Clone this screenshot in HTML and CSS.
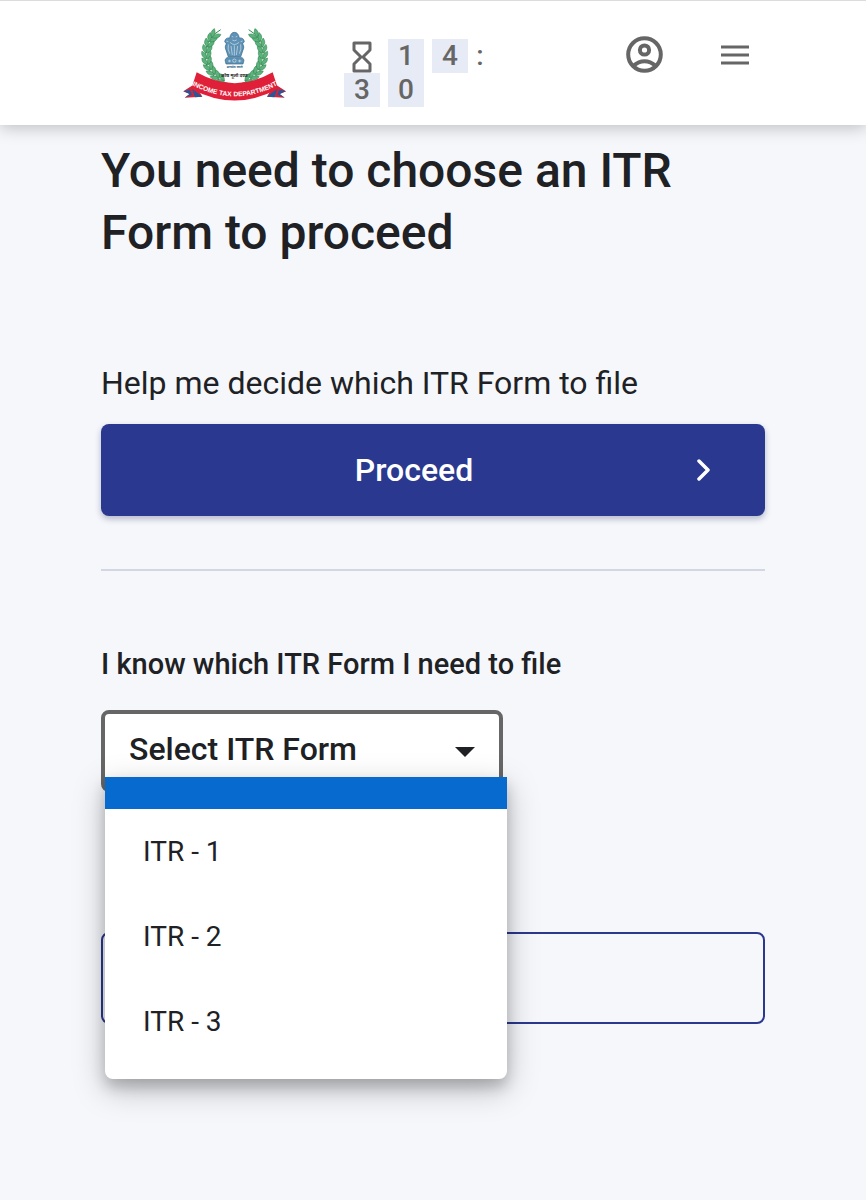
FILE: index.html
```html
<!DOCTYPE html>
<html lang="en">

<head>
  <meta charset="UTF-8" />
  <meta name="viewport" content="width=device-width, initial-scale=1.0" />
  <title>Choose ITR Form | Income Tax Department</title>
  <link rel="stylesheet" href="styles.css">
</head>

<body>

  <header class="top-bar">
    <a href="#" class="logo" aria-label="Income Tax Department">
      <svg viewBox="24 26 312 237" width="104" height="79">
        <defs>
          <g id="leaf">
            <path d="M95 122 Q76 116 81 98 Q96 105 95 122Z" />
            <path d="M95 122 Q92 104 107 97 Q113 113 95 122Z" />
          </g>
          <g id="branch">
            <path d="M158 198 A86 86 0 0 1 137 37" fill="none" stroke="#2f8a4e" stroke-width="3" />
            <use href="#leaf" transform="rotate(-62 179 112)" />
            <use href="#leaf" transform="rotate(-50 179 112)" />
            <use href="#leaf" transform="rotate(-38 179 112)" />
            <use href="#leaf" transform="rotate(-26 179 112)" />
            <use href="#leaf" transform="rotate(-14 179 112)" />
            <use href="#leaf" transform="rotate(-2 179 112)" />
            <use href="#leaf" transform="rotate(10 179 112)" />
            <use href="#leaf" transform="rotate(22 179 112)" />
            <use href="#leaf" transform="rotate(34 179 112)" />
            <use href="#leaf" transform="rotate(44 179 112)" />
          </g>
          <path id="ribbon-line" d="M52 204 Q179 270 306 204" />
        </defs>
        <!-- wreath -->
        <g fill="#5cb37b" stroke="#2c7f49" stroke-width="1.5">
          <use href="#branch" />
          <use href="#branch" transform="translate(358 0) scale(-1 1)" />
        </g>
        <!-- lion capital -->
        <g fill="#5f92b5" stroke="#356a90" stroke-width="2">
          <path d="M164 62 Q151 60 149 73 L154 79 Q147 88 154 101 L160 119 H197 L203 101 Q210 88 203 79 L208 73 Q206 60 193 62 Q190 45 178 45 Q167 45 164 62Z" />
          <path d="M155 121 H202 L207 128 L204 140 H153 L150 128Z" />
        </g>
        <g fill="none" stroke="#d5e5ef" stroke-width="2">
          <path d="M170 57 L175 59 M182 59 L187 57 M172 68 Q178 73 185 68 M165 75 Q178 88 192 75 M168 86 L172 113 M178 84 V115 M188 86 L184 113 M160 81 Q157 96 164 109 M197 81 Q200 96 193 109 M154 71 L160 73 M203 71 L197 73" />
          <circle cx="178" cy="130" r="5" />
          <path d="M159 131 H168 M189 131 H199 M163 127 V135 M194 127 V135" />
        </g>
        <text x="179" y="153" class="motto motto-blue">सत्यमेव जयते</text>
        <text x="179" y="178" class="motto">कोष मूलो दण्डः</text>
        <!-- ribbon -->
        <path d="M25 222 L60 199 L82 238 L29 241 L44 230Z" fill="#ce263d" />
        <path d="M333 222 L298 199 L276 238 L329 241 L314 230Z" fill="#ce263d" />
        <path d="M25 222 L45 217 L51 232 L29 241 L44 230Z M333 222 L313 217 L307 232 L329 241 L314 230Z M51 214 L82 238 L60 240Z M307 214 L276 238 L298 240Z" fill="#28569b" />
        <path d="M65 165 Q179 230 293 165 L309 214 Q179 285 49 214Z" fill="#df2038" />
        <text class="ribbon-text"><textPath href="#ribbon-line" startOffset="50%">INCOME TAX DEPARTMENT</textPath></text>
      </svg>
    </a>

    <div class="timer" role="timer">
      <span class="timer-icon">
        <svg viewBox="0 0 20 32" width="20" height="32" fill="none" stroke="#666" stroke-width="3" stroke-linejoin="round">
          <path d="M2 2 H18 V9 L11 16 L18 23 V30 H2 V23 L9 16 L2 9Z" />
        </svg>
      </span>
      <span class="digit">1</span>
      <span class="digit">4</span>
      <span class="colon">:</span>
      <span class="digit">3</span>
      <span class="digit">0</span>
    </div>

    <div class="top-actions">
      <button type="button" class="icon-btn" aria-label="Profile">
        <svg viewBox="0 0 37 37" width="37" height="37" fill="none" stroke="#666" stroke-width="4">
          <circle cx="18.5" cy="18.5" r="16.3" />
          <circle cx="18.5" cy="14" r="4.6" />
          <path d="M7 30 Q18.500 20.500 30 30" />
        </svg>
      </button>
      <button type="button" class="icon-btn" aria-label="Menu">
        <svg viewBox="0 0 28 20" width="28" height="20" fill="none" stroke="#666" stroke-width="3">
          <path d="M0 2 H28 M0 10 H28 M0 18 H28" />
        </svg>
      </button>
    </div>
  </header>

  <main class="content">
    <h1>You need to choose an ITR Form to proceed</h1>

    <p class="help-text">Help me decide which ITR Form to file</p>
    <button type="button" class="btn btn-primary">
      <span>Proceed</span>
      <svg viewBox="0 0 14 22" width="14" height="22" fill="none" stroke="#fff" stroke-width="3.500" stroke-linecap="round" stroke-linejoin="round">
        <path d="M2 2 L11 11 L2 20" />
      </svg>
    </button>

    <hr />

    <label for="itr-form">I know which ITR Form I need to file</label>
    <div class="select-box">
      <select id="itr-form">
        <option>Select ITR Form</option>
      </select>
      <svg class="caret" viewBox="0 0 20 10" width="20" height="10">
        <path d="M0 0 H20 L10 10Z" fill="#202124" />
      </svg>
      <ul class="options" role="listbox" aria-label="ITR Form">
        <li class="blank" role="option" aria-selected="true"></li>
        <li role="option">ITR - 1</li>
        <li role="option">ITR - 2</li>
        <li role="option">ITR - 3</li>
      </ul>
    </div>

    <button type="button" class="btn btn-outline" aria-label="Back"></button>
  </main>

</body>

</html>
```
FILE: styles.css
```css
* {
  box-sizing: border-box;
}

body {
  min-height: 100vh;
  margin: 0;
  font-family: Roboto, sans-serif;
  background: #f5f7fb;
  color: #202124;
}

.top-bar {
  display: flex;
  align-items: flex-start;
  height: 125px;
  padding: 0 117px 0 183px;
  background: #fff;
  border-top: 1px solid #dcdcdc;
  box-shadow: 0 2px 16px rgba(0, 0, 0, 0.25);
}

.logo {
  margin-top: 25px;
}

.logo svg,
.icon-btn svg {
  display: block;
}

.motto {
  font-family: "Noto Sans", sans-serif;
  font-size: 14px;
  font-weight: bold;
  text-anchor: middle;
  fill: #222;
}

.motto-blue {
  font-size: 9px;
  fill: #285b82;
}

.ribbon-text {
  font-family: "Liberation Sans", sans-serif;
  font-size: 20px;
  font-weight: bold;
  text-anchor: middle;
  fill: #fff;
}

.timer {
  display: flex;
  flex-wrap: wrap;
  column-gap: 8px;
  width: 152px;
  margin: 38px 0 0 57px;
  font-size: 28px;
  font-weight: 500;
  line-height: 34px;
  color: #666;
}

.timer-icon,
.digit {
  width: 36px;
  height: 34px;
  text-align: center;
}

.timer-icon svg {
  display: block;
  margin: 2px auto 0;
}

.digit {
  background: #e7ebf5;
}

.colon {
  width: 8px;
  text-align: center;
}

.top-actions {
  display: flex;
  align-items: center;
  gap: 58px;
  margin: 35px 0 0 auto;
}

.icon-btn {
  padding: 0;
  border: none;
  background: none;
  cursor: pointer;
}

.content {
  padding: 15px 101px 60px;
}

h1 {
  margin: 0 0 97px;
  font-size: 48px;
  font-weight: 500;
  line-height: 62px;
}

.help-text {
  margin: 0 0 19px;
  font-size: 32px;
  line-height: 44px;
}

.btn {
  display: flex;
  align-items: center;
  gap: 24px;
  width: 100%;
  height: 92px;
  padding: 0 54px;
  border-radius: 8px;
  font-family: inherit;
  font-size: 32px;
  font-weight: 500;
  cursor: pointer;
}

.btn span {
  flex: 1;
  text-align: center;
}

.btn-primary {
  border: none;
  background: #2b388f;
  color: #fff;
  box-shadow: 0 3px 6px rgba(30, 40, 90, 0.3);
}

.btn-outline {
  margin-top: 140px;
  border: 2px solid #2b388f;
  background: transparent;
}

hr {
  height: 2px;
  margin: 53px 0 73px;
  border: none;
  background: #d3d6e4;
}

label {
  display: block;
  margin-bottom: 26px;
  font-size: 29px;
  font-weight: 500;
  line-height: 40px;
}

.select-box {
  position: relative;
  width: 402px;
  max-width: 100%;
}

select {
  display: block;
  width: 100%;
  height: 82px;
  padding: 0 24px 4px;
  border: 4px solid #666;
  border-radius: 8px;
  background: #fff;
  color: #202124;
  font-family: inherit;
  font-size: 32px;
  font-weight: 500;
  appearance: none;
}

.caret {
  position: absolute;
  top: 37px;
  right: 28px;
}

.options {
  position: absolute;
  top: 67px;
  left: 4px;
  width: 100%;
  margin: 0;
  padding: 0 0 15px;
  list-style: none;
  background: #fff;
  border-radius: 0 0 8px 8px;
  box-shadow: 0 10px 32px rgba(0, 0, 0, 0.25), 0 8px 14px rgba(0, 0, 0, 0.18);
}

.options li {
  padding: 0 38px;
  font-size: 28px;
  line-height: 85px;
}

.options .blank {
  height: 32px;
  background: #066acf;
}
```
